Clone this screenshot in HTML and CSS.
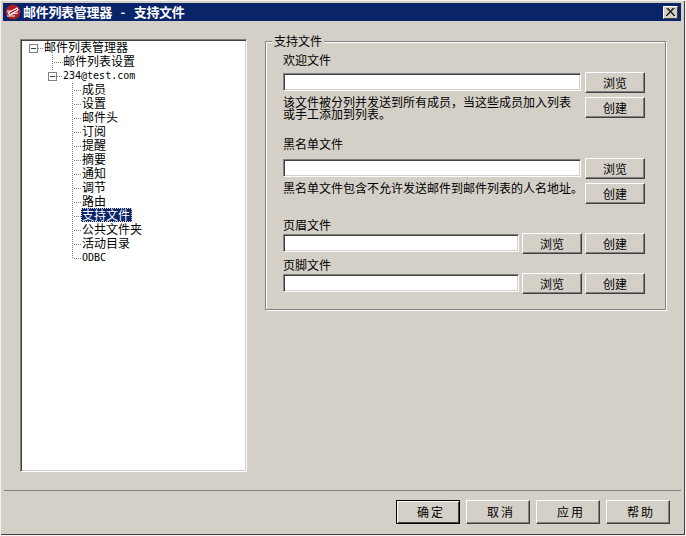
FILE: index.html
```html
<!DOCTYPE html>
<html lang="zh-CN">
<head>
<meta charset="utf-8">
<title>邮件列表管理器 - 支持文件</title>
<link rel="stylesheet" href="styles.css">
</head>
<body>
<div class="window">
  <header class="titlebar">
    <svg class="app-icon" width="16" height="16" viewBox="0 0 16 16">
      <circle cx="8" cy="8" r="7.5" fill="#a51e22"/>
      <path d="M3 9 L12 4 L13 6 L5 11 Z" fill="none" stroke="#fff" stroke-width="1.1"/>
      <path d="M2 7 H6 M2 12 H10 M6 10 L13 9" stroke="#fff" stroke-width="1" fill="none"/>
    </svg>
    <span class="title-text">邮件列表管理器 - 支持文件</span>
    <button class="close" type="button" aria-label="关闭">
      <svg width="9" height="8" viewBox="0 0 9 8"><path d="M0.5 0 L8.5 8 M8.5 0 L0.5 8 M1.8 0 L9 8 M7.2 0 L0 8" stroke="#000" stroke-width="1" fill="none"/></svg>
    </button>
  </header>
  <main class="main">
    <nav class="tree">
      <div class="row root"><span class="box"></span><span class="dash d-root"></span><span>邮件列表管理器</span></div>
      <div class="level1">
        <div class="row"><span class="dash d1"></span><span>邮件列表设置</span></div>
        <div class="row"><span class="box box1"></span><span class="dash d-acct"></span><span class="mono">234@test.com</span></div>
      </div>
      <div class="level2">
        <div class="row"><span class="dash d2"></span><span>成员</span></div>
        <div class="row"><span class="dash d2"></span><span>设置</span></div>
        <div class="row"><span class="dash d2"></span><span>邮件头</span></div>
        <div class="row"><span class="dash d2"></span><span>订阅</span></div>
        <div class="row"><span class="dash d2"></span><span>提醒</span></div>
        <div class="row"><span class="dash d2"></span><span>摘要</span></div>
        <div class="row"><span class="dash d2"></span><span>通知</span></div>
        <div class="row"><span class="dash d2"></span><span>调节</span></div>
        <div class="row"><span class="dash d2"></span><span>路由</span></div>
        <div class="row"><span class="dash d2"></span><span class="selected">支持文件</span></div>
        <div class="row"><span class="dash d2"></span><span>公共文件夹</span></div>
        <div class="row"><span class="dash d2"></span><span>活动目录</span></div>
        <div class="row"><span class="dash d2"></span><span class="mono">ODBC</span></div>
      </div>
    </nav>
    <fieldset class="group">
      <legend class="legend">支持文件</legend>
      <div class="label">欢迎文件</div>
      <div class="grid-wide">
        <input class="field" type="text">
        <button class="btn" type="button">浏览</button>
        <p class="note">该文件被分列并发送到所有成员，当这些成员加入列表<br>或手工添加到列表。</p>
        <button class="btn" type="button">创建</button>
      </div>
      <div class="label label-black">黑名单文件</div>
      <div class="grid-wide">
        <input class="field" type="text">
        <button class="btn" type="button">浏览</button>
        <p class="note">黑名单文件包含不允许发送邮件到邮件列表的人名地址。</p>
        <button class="btn" type="button">创建</button>
      </div>
      <div class="label label-header">页眉文件</div>
      <div class="grid-narrow">
        <input class="field" type="text">
        <button class="btn" type="button">浏览</button>
        <button class="btn" type="button">创建</button>
      </div>
      <div class="label label-footer">页脚文件</div>
      <div class="grid-narrow">
        <input class="field" type="text">
        <button class="btn" type="button">浏览</button>
        <button class="btn" type="button">创建</button>
      </div>
    </fieldset>
  </main>
  <footer class="footer">
    <button class="btn action default" type="button">确定</button>
    <button class="btn action" type="button">取消</button>
    <button class="btn action" type="button">应用</button>
    <button class="btn action" type="button">帮助</button>
  </footer>
</div>
</body>
</html>
```
FILE: styles.css
```css
* { box-sizing: border-box; }
html, body { margin: 0; padding: 0; }
body {
  width: 686px;
  height: 536px;
  background: #f4f3f0;
  overflow: hidden;
  font-family: "Noto Sans CJK SC", "Liberation Sans", sans-serif;
  font-size: 12px;
  color: #000;
}
.window {
  display: flex;
  flex-direction: column;
  width: 684px;
  height: 534px;
  margin: 1px 0 0 1px;
  padding: 2px 3px 0 2px;
  background: #d4d0c8;
  border-right: 1px solid #404040;
  border-bottom: 1px solid #404040;
}
.titlebar {
  display: flex;
  align-items: center;
  flex: none;
  height: 18px;
  padding: 0 3px 0 2px;
  background: #0a246a;
  color: #fff;
}
.app-icon { flex: none; margin-right: 2px; }
.title-text {
  flex: 1;
  font-size: 13px;
  font-weight: 700;
  line-height: 18px;
  letter-spacing: -0.3px;
  word-spacing: 6px;
  white-space: nowrap;
}
.close {
  display: flex;
  align-items: center;
  justify-content: center;
  width: 15px;
  height: 13px;
  padding: 0;
  background: #d4d0c8;
  border: 1px solid;
  border-color: #fff #404040 #404040 #fff;
}
.main {
  display: flex;
  align-items: flex-start;
  flex: 1;
  min-height: 0;
  padding: 13px 0 0 17px;
}
.tree {
  flex: none;
  width: 227px;
  height: 433px;
  margin-top: 5px;
  padding: 1px 0 0 7px;
  background: #fff;
  border: 1px solid;
  border-color: #808080 #fff #fff #808080;
  box-shadow: inset 1px 1px #404040, inset -1px -1px #d4d0c8;
  line-height: 14px;
}
.row {
  display: flex;
  align-items: center;
  height: 14px;
  white-space: nowrap;
}
.row > span:last-child { margin-bottom: 2px; }
.row > .mono:last-child { margin-bottom: 0; }
.box {
  flex: none;
  width: 9px;
  height: 9px;
  margin-left: 1px;
  background: linear-gradient(#404040, #404040) center / 5px 1px no-repeat #fff;
  border: 1px solid #808080;
}
.dash {
  flex: none;
  height: 1px;
  background: repeating-linear-gradient(to right, #808080 0 1px, transparent 1px 2px);
}
.d-root { width: 6px; }
.level1 {
  margin-left: 24px;
  background: repeating-linear-gradient(to bottom, #808080 0 1px, transparent 1px 2px) left top / 1px 16px no-repeat;
}
.level1 .d1 { width: 9px; margin-left: 2px; }
.box1 { margin-left: -4px; }
.d-acct { width: 6px; }
.level2 {
  margin-left: 44px;
  background: repeating-linear-gradient(to bottom, #808080 0 1px, transparent 1px 2px) left top / 1px calc(100% - 7px) no-repeat;
}
.d2 { width: 8px; margin-left: 2px; }
.mono {
  font-family: "DejaVu Sans Mono", "Liberation Mono", monospace;
  font-size: 10px;
}
.selected {
  display: block;
  width: 51px;
  height: 14px;
  margin-left: -1px;
  padding-left: 1px;
  background: #0a246a;
  color: #fff;
  outline: 1px dotted #d4d0c8;
  outline-offset: -1px;
}
.group {
  flex: none;
  width: 401px;
  height: 276px;
  min-width: 0;
  margin: 0 0 0 18px;
  padding: 5px 0 0 17px;
  border: 1px solid #808080;
  box-shadow: inset 1px 1px #fff, 1px 1px #fff;
}
.legend {
  height: 14px;
  margin-left: -11px;
  padding: 0 2px;
  background: #d4d0c8;
  line-height: 14px;
}
.label {
  height: 14px;
  line-height: 14px;
  white-space: nowrap;
  margin-bottom: 5px;
}
.label-black { margin-top: 17px; margin-bottom: 7px; }
.label-header { margin-top: 14px; margin-bottom: 1px; }
.label-footer { margin-top: 4px; margin-bottom: 1px; }
.grid-wide {
  display: grid;
  grid-template-columns: 298px 60px;
  column-gap: 4px;
  row-gap: 4px;
}
.grid-narrow {
  display: grid;
  grid-template-columns: 236px 60px 60px;
  column-gap: 3px;
}
.field {
  display: block;
  width: 100%;
  height: 18px;
  margin: 1px 0 0;
  padding: 0;
  background: #fff;
  border: 1px solid;
  border-color: #808080 #fff #fff #808080;
  box-shadow: inset 1px 1px #404040, inset -1px -1px #d4d0c8;
  outline: none;
  border-radius: 0;
}
.btn {
  display: block;
  height: 21px;
  padding: 0;
  background: #d4d0c8;
  border: 1px solid;
  border-color: #fff #404040 #404040 #fff;
  box-shadow: inset -1px -1px #808080;
  border-radius: 0;
  font: 12px/19px "Noto Sans CJK SC", "Liberation Sans", sans-serif;
  color: #000;
}
.note {
  margin: -1px 0 0;
  line-height: 12px;
  white-space: nowrap;
}
.footer {
  display: flex;
  justify-content: flex-end;
  flex: none;
  gap: 6px;
  height: 44px;
  margin-left: 1px;
  padding: 9px 11px 0 0;
  border-top: 1px solid #808080;
}
.action {
  width: 64px;
  height: 24px;
  letter-spacing: 2px;
  text-indent: 6px;
  line-height: 22px;
}
.default {
  border-color: #000;
  box-shadow: inset 1px 1px #fff, inset -1px -1px #404040;
}
```
